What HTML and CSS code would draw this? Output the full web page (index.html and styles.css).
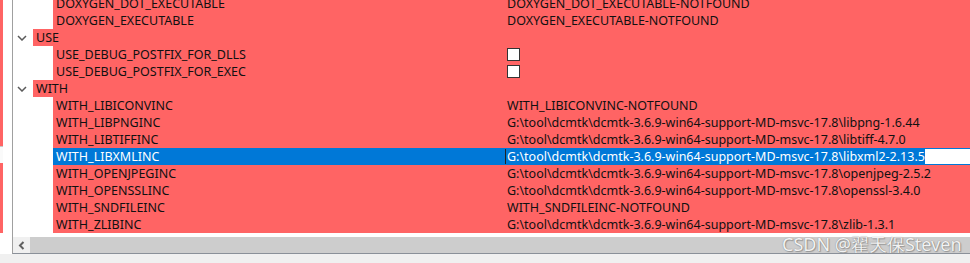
FILE: index.html
```html
<!DOCTYPE html>
<html lang="en">
<head>
    <meta charset="UTF-8">
    <meta name="viewport" content="width=device-width, initial-scale=1.0">
    <title>CMake - cache</title>
    <link rel="stylesheet" href="styles.css">
</head>
<body>
    <div class="window">
        <!-- bord de la fenêtre voisine -->
        <div class="edge">
            <div class="edge-red edge-top"></div>
            <div class="edge-gap"></div>
            <div class="edge-red edge-low"></div>
        </div>

        <div class="tree">
            <div class="rows">
                <div class="row">
                    <div class="indent"></div>
                    <div class="name">DOXYGEN_DOT_EXECUTABLE</div>
                    <div class="value">DOXYGEN_DOT_EXECUTABLE-NOTFOUND</div>
                </div>
                <div class="row">
                    <div class="indent"></div>
                    <div class="name">DOXYGEN_EXECUTABLE</div>
                    <div class="value">DOXYGEN_EXECUTABLE-NOTFOUND</div>
                </div>

                <div class="row group">
                    <div class="toggle">
                        <svg width="10" height="6" viewBox="0 0 10 6"><polyline points="1,1 5,5 9,1" /></svg>
                    </div>
                    <div class="label">USE</div>
                </div>
                <div class="row">
                    <div class="indent"></div>
                    <div class="name">USE_DEBUG_POSTFIX_FOR_DLLS</div>
                    <div class="value"><span class="check"></span></div>
                </div>
                <div class="row">
                    <div class="indent"></div>
                    <div class="name">USE_DEBUG_POSTFIX_FOR_EXEC</div>
                    <div class="value"><span class="check"></span></div>
                </div>

                <div class="row group">
                    <div class="toggle">
                        <svg width="10" height="6" viewBox="0 0 10 6"><polyline points="1,1 5,5 9,1" /></svg>
                    </div>
                    <div class="label">WITH</div>
                </div>
                <div class="row">
                    <div class="indent"></div>
                    <div class="name">WITH_LIBICONVINC</div>
                    <div class="value">WITH_LIBICONVINC-NOTFOUND</div>
                </div>
                <div class="row">
                    <div class="indent"></div>
                    <div class="name">WITH_LIBPNGINC</div>
                    <div class="value">G:\tool\dcmtk\dcmtk-3.6.9-win64-support-MD-msvc-17.8\libpng-1.6.44</div>
                </div>
                <div class="row">
                    <div class="indent"></div>
                    <div class="name">WITH_LIBTIFFINC</div>
                    <div class="value">G:\tool\dcmtk\dcmtk-3.6.9-win64-support-MD-msvc-17.8\libtiff-4.7.0</div>
                </div>
                <div class="row selected">
                    <div class="indent"></div>
                    <div class="name">WITH_LIBXMLINC</div>
                    <div class="value">
                        <div class="editor"><span class="picked">G:\tool\dcmtk\dcmtk-3.6.9-win64-support-MD-msvc-17.8\libxml2-2.13.5</span></div>
                    </div>
                </div>
                <div class="row">
                    <div class="indent"></div>
                    <div class="name">WITH_OPENJPEGINC</div>
                    <div class="value">G:\tool\dcmtk\dcmtk-3.6.9-win64-support-MD-msvc-17.8\openjpeg-2.5.2</div>
                </div>
                <div class="row">
                    <div class="indent"></div>
                    <div class="name">WITH_OPENSSLINC</div>
                    <div class="value">G:\tool\dcmtk\dcmtk-3.6.9-win64-support-MD-msvc-17.8\openssl-3.4.0</div>
                </div>
                <div class="row">
                    <div class="indent"></div>
                    <div class="name">WITH_SNDFILEINC</div>
                    <div class="value">WITH_SNDFILEINC-NOTFOUND</div>
                </div>
                <div class="row">
                    <div class="indent"></div>
                    <div class="name">WITH_ZLIBINC</div>
                    <div class="value">G:\tool\dcmtk\dcmtk-3.6.9-win64-support-MD-msvc-17.8\zlib-1.3.1</div>
                </div>
            </div>

            <div class="hscroll">
                <div class="arrow">
                    <svg width="7" height="9" viewBox="0 0 7 9"><polyline points="5.5,1 2,4.5 5.5,8" /></svg>
                </div>
                <div class="thumb"></div>
                <div class="watermark">CSDN @翟天保Steven</div>
            </div>
        </div>
    </div>
    <div class="status"></div>
</body>
</html>
```

FILE: styles.css
```css
body {
    margin: 0;
    padding: 0;
    width: 970px;
    height: 263px;
    overflow: hidden;
    background-color: #f0f0f0;
    font-family: "Noto Sans", "Open Sans", Arial, sans-serif;
    font-size: 12.5px;
    color: #111;
}

.window {
    display: flex;
    height: 254px;
    background-color: #fff;
}

/* bande rouge a gauche */
.edge {
    width: 3px;
    display: flex;
    flex-direction: column;
}

.edge-red {
    background-color: #ff6464;
}

.edge-top {
    height: 146px;
}

.edge-gap {
    height: 16px;
    border-top: 1px solid #c8c8c8;
    background-color: #fafafa;
}

.edge-low {
    height: 70px;
}

.tree {
    flex: 1;
    margin-left: 9px;
    border-left: 1px solid #a0a0a0;
    border-bottom: 1px solid #8a9099;
    display: flex;
    flex-direction: column;
    overflow: hidden;
}

.rows {
    margin-top: -5px;
    height: 238px;
    margin-bottom: 4px;
}

.row {
    display: flex;
    height: 17px;
    line-height: 17px;
    white-space: nowrap;
}

.indent {
    width: 40px;
}

.name {
    width: 452px;
    padding-left: 3px;
    box-sizing: border-box;
    background-color: #ff6464;
    overflow: hidden;
}

.value {
    flex: 1;
    padding-left: 2px;
    background-color: #ff6464;
    display: flex;
    align-items: center;
}

.group .toggle {
    width: 20px;
    display: flex;
    align-items: center;
    padding-left: 4px;
    box-sizing: border-box;
}

.toggle polyline {
    fill: none;
    stroke: #5a5a5a;
    stroke-width: 1.5;
}

.group .label {
    flex: 1;
    padding-left: 3px;
    background-color: #ff6464;
}

.check {
    width: 11px;
    height: 11px;
    border: 1px solid #333;
    background-color: #fff;
}

.selected .name {
    background-color: #0078d7;
    color: #fff;
}

.selected .value {
    padding-left: 0;
    background-color: #0078d7;
    align-items: stretch;
}

.editor {
    flex: 1;
    margin: 1px 0;
    background-color: #fff;
    border-left: 1px solid #222;
    line-height: 15px;
}

.picked {
    display: inline-block;
    height: 15px;
    padding-left: 1px;
    background-color: #0078d7;
    color: #fff;
}

.hscroll {
    height: 16px;
    display: flex;
    position: relative;
}

.hscroll .arrow {
    width: 17px;
    background-color: #f0f0f0;
    display: flex;
    align-items: center;
    justify-content: center;
}

.arrow polyline {
    fill: none;
    stroke: #606060;
    stroke-width: 2;
}

.thumb {
    flex: 1;
    background-color: #cdcdcd;
}

.watermark {
    position: absolute;
    left: 769px;
    top: -3px;
    font-size: 18px;
    line-height: 21px;
    color: #f2f2f2;
    text-shadow: 0 0 1px #777, 1px 1px 1px #999;
    white-space: nowrap;
}

.status {
    height: 9px;
    background-color: #f0f0f0;
}
```
